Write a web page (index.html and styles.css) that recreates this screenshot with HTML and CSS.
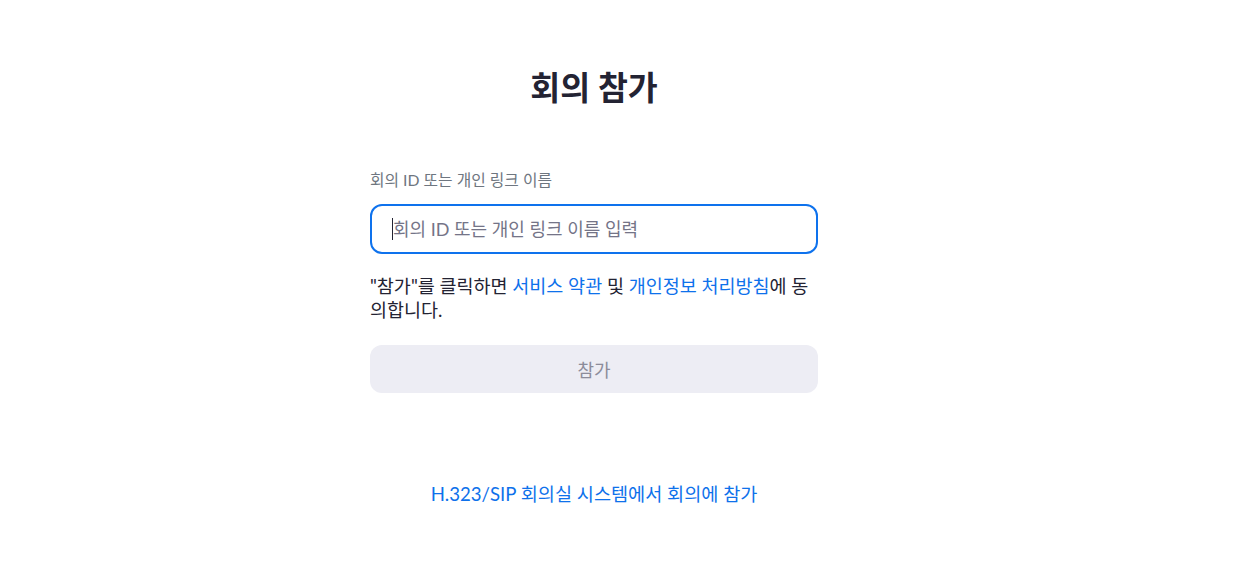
FILE: index.html
```html
<!DOCTYPE html>
<html lang="ko">
<head>
<meta charset="utf-8">
<link rel="stylesheet" href="styles.css">
</head>
<body>
<div class="page">
  <main class="join">
    <h1 class="title">회의 참가</h1>
    <label class="label" for="mid">회의 ID 또는 개인 링크 이름</label>
    <div class="input-box">
      <span class="caret"></span><span class="placeholder">회의 ID 또는 개인 링크 이름 입력</span>
    </div>
    <p class="agree">"참가"를 클릭하면 <a class="link" href="#">서비스 약관</a> 및 <a class="link" href="#">개인정보 처리방침</a>에 동의합니다.</p>
    <div class="btn">참가</div>
    <a class="sip link" href="#">H.323/SIP 회의실 시스템에서 회의에 참가</a>
  </main>
</div>
</body>
</html>
```
FILE: styles.css
```css
html, body {
  margin: 0;
  padding: 0;
  background: #ffffff;
}
body {
  font-family: Lato, "Noto Sans CJK KR", sans-serif;
  color: #232333;
}
.page {
  width: 1188px;
  display: flex;
  justify-content: center;
}
.join {
  width: 448px;
  display: flex;
  flex-direction: column;
  padding-top: 67px;
}
.title {
  margin: 0;
  font-size: 32.5px;
  line-height: 42px;
  font-weight: 700;
  text-align: center;
  color: #232333;
}
.label {
  margin-top: 60px;
  font-size: 15.8px;
  line-height: 22px;
  color: #6e7680;
}
.input-box {
  margin-top: 13px;
  height: 50px;
  box-sizing: border-box;
  border: 2px solid #0e72ed;
  border-radius: 12px;
  display: flex;
  align-items: center;
  padding-left: 20px;
}
.caret {
  width: 1px;
  height: 22px;
  background: #232333;
}
.placeholder {
  font-size: 18px;
  color: #747487;
  line-height: 24px;
}
.agree {
  margin: 20px 0 0;
  font-size: 18.5px;
  line-height: 24px;
  color: #232333;
}
.link {
  color: #0e71eb;
  text-decoration: none;
}
.btn {
  margin-top: 23px;
  height: 48px;
  border-radius: 12px;
  background: #ededf4;
  color: #8c8c9a;
  font-size: 18px;
  display: flex;
  align-items: center;
  justify-content: center;
}
.sip {
  margin-top: 89px;
  font-size: 18.6px;
  line-height: 24px;
  text-align: center;
}
```
